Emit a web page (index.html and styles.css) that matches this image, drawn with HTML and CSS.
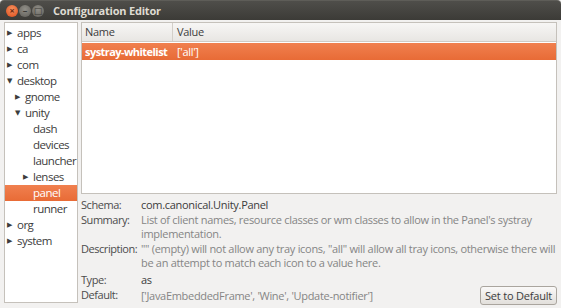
FILE: index.html
```html
<!DOCTYPE html>
<html lang="en">
<head>
  <meta charset="UTF-8">
  <title>Configuration Editor</title>
  <link rel="stylesheet" href="styles.css">
</head>
<body>
  <div class="window">
    <div class="titlebar">
      <div class="buttons">
        <span class="wbtn close">&#215;</span>
        <span class="wbtn min">&#8211;</span>
        <span class="wbtn max">&#9633;</span>
      </div>
      <span class="title">Configuration Editor</span>
    </div>

    <div class="body">
      <div class="tree">
        <div class="node"><span class="arrow">&#9654;</span>apps</div>
        <div class="node"><span class="arrow">&#9654;</span>ca</div>
        <div class="node"><span class="arrow">&#9654;</span>com</div>
        <div class="node"><span class="arrow">&#9660;</span>desktop</div>
        <div class="node lvl1"><span class="arrow">&#9654;</span>gnome</div>
        <div class="node lvl1"><span class="arrow">&#9660;</span>unity</div>
        <div class="node lvl2"><span class="arrow"></span>dash</div>
        <div class="node lvl2"><span class="arrow"></span>devices</div>
        <div class="node lvl2"><span class="arrow"></span>launcher</div>
        <div class="node lvl2"><span class="arrow">&#9654;</span>lenses</div>
        <div class="node lvl2 selected"><span class="arrow"></span>panel</div>
        <div class="node lvl2"><span class="arrow"></span>runner</div>
        <div class="node"><span class="arrow">&#9654;</span>org</div>
        <div class="node"><span class="arrow">&#9654;</span>system</div>
      </div>

      <div class="main">
        <div class="keys">
          <div class="keys-header">
            <div class="col-name">Name</div>
            <div class="col-value">Value</div>
          </div>
          <div class="key-row selected">
            <div class="col-name bold">systray-whitelist</div>
            <div class="col-value">['all']</div>
          </div>
        </div>

        <div class="info">
          <div class="label">Schema:</div>
          <div class="value dark">com.canonical.Unity.Panel</div>
          <div class="label">Summary:</div>
          <div class="value">List of client names, resource classes or wm classes to allow in the Panel's systray implementation.</div>
          <div class="label">Description:</div>
          <div class="value">"" (empty) will not allow any tray icons, "all" will allow all tray icons, otherwise there will be an attempt to match each icon to a value here.</div>
          <div class="label spaced">Type:</div>
          <div class="value dark spaced">as</div>
          <div class="label">Default:</div>
          <div class="value last">
            <span>['JavaEmbeddedFrame', 'Wine', 'Update-notifier']</span>
            <button class="reset">Set to Default</button>
          </div>
        </div>
      </div>
    </div>
  </div>
</body>
</html>
```

FILE: styles.css
```css
body {
  margin: 0;
  background-color: #f2f1f0;
  font-family: 'Open Sans', 'DejaVu Sans', sans-serif;
  font-size: 11px;
  letter-spacing: -0.3px;
  color: #3c3c3c;
}

.window {
  width: 561px;
  height: 308px;
  display: flex;
  flex-direction: column;
  overflow: hidden;
}

.titlebar {
  height: 20px;
  flex: none;
  display: flex;
  align-items: center;
  background: linear-gradient(#4f4e4a, #3c3b37);
  border-top: 1px solid #5e5d58;
  border-radius: 4px 4px 0 0;
  box-sizing: border-box;
}

.buttons {
  display: flex;
  gap: 1px;
  padding-left: 6px;
  width: 47px;
}

.wbtn {
  width: 12px;
  height: 12px;
  border-radius: 50%;
  font-size: 9px;
  line-height: 12px;
  letter-spacing: 0;
  text-align: center;
  font-weight: bold;
  color: #3c3b37;
  background: radial-gradient(circle at 50% 35%, #918f88, #5f5d58);
}

.wbtn.close {
  background: radial-gradient(circle at 50% 35%, #f7915e, #dd4c1b);
  color: #6a2a12;
}

.title {
  color: #dfdbd2;
  font-weight: bold;
  font-size: 11px;
  letter-spacing: -0.2px;
}

.body {
  flex: 1;
  display: flex;
  gap: 3px;
  padding: 2px 4px 5px 4px;
  min-height: 0;
}

.tree {
  width: 72px;
  flex: none;
  background-color: white;
  border: 1px solid #c5c1bb;
  padding-top: 2px;
  font-size: 11.5px;
  letter-spacing: -0.5px;
  overflow: hidden;
}

.node {
  height: 16px;
  line-height: 16px;
  display: flex;
  align-items: center;
  padding-left: 2px;
  white-space: nowrap;
}

.node.lvl1 {
  padding-left: 10px;
}

.node.lvl2 {
  padding-left: 18px;
}

.arrow {
  width: 10px;
  font-size: 7px;
  color: #3c3c3c;
  flex: none;
}

.node.selected {
  background: linear-gradient(#f0804f, #e86b36);
  color: white;
}

.main {
  flex: 1;
  display: flex;
  flex-direction: column;
  gap: 4px;
}

.keys {
  height: 172px;
  flex: none;
  background-color: white;
  border: 1px solid #c5c1bb;
  box-sizing: border-box;
}

.keys-header {
  display: flex;
  height: 18px;
  line-height: 18px;
  background: linear-gradient(#f7f6f5, #e8e6e3);
  border-bottom: 1px solid #cfcbc5;
}

.keys-header .col-name {
  border-right: 1px solid #d3cfc9;
}

.col-name {
  width: 87px;
  padding-left: 3px;
  white-space: nowrap;
}

.col-value {
  padding-left: 4px;
}

.key-row {
  display: flex;
  height: 17px;
  line-height: 17px;
  margin-top: 1px;
}

.key-row .col-name {
  width: 88px;
}

.key-row.selected {
  background: linear-gradient(#f0804f, #e86b36);
  color: white;
}

.bold {
  font-weight: bold;
  letter-spacing: -0.55px;
}

.info {
  display: grid;
  grid-template-columns: 60px 1fr;
  row-gap: 1px;
  line-height: 14px;
}

.label {
  color: #4c4c4c;
  white-space: nowrap;
  letter-spacing: -0.45px;
}

.value {
  color: #858585;
}

.value.dark {
  color: #3c3c3c;
}

.spaced {
  margin-top: 2px;
}

.value.last {
  display: flex;
  justify-content: space-between;
  align-items: center;
  margin-top: -2px;
}

.reset {
  font-family: inherit;
  font-size: 11px;
  letter-spacing: -0.2px;
  color: #3c3c3c;
  height: 19px;
  padding: 0 4px;
  border: 1px solid #aaa59e;
  border-radius: 3px;
  background: linear-gradient(#faf9f8, #e2dfdb);
}
```
